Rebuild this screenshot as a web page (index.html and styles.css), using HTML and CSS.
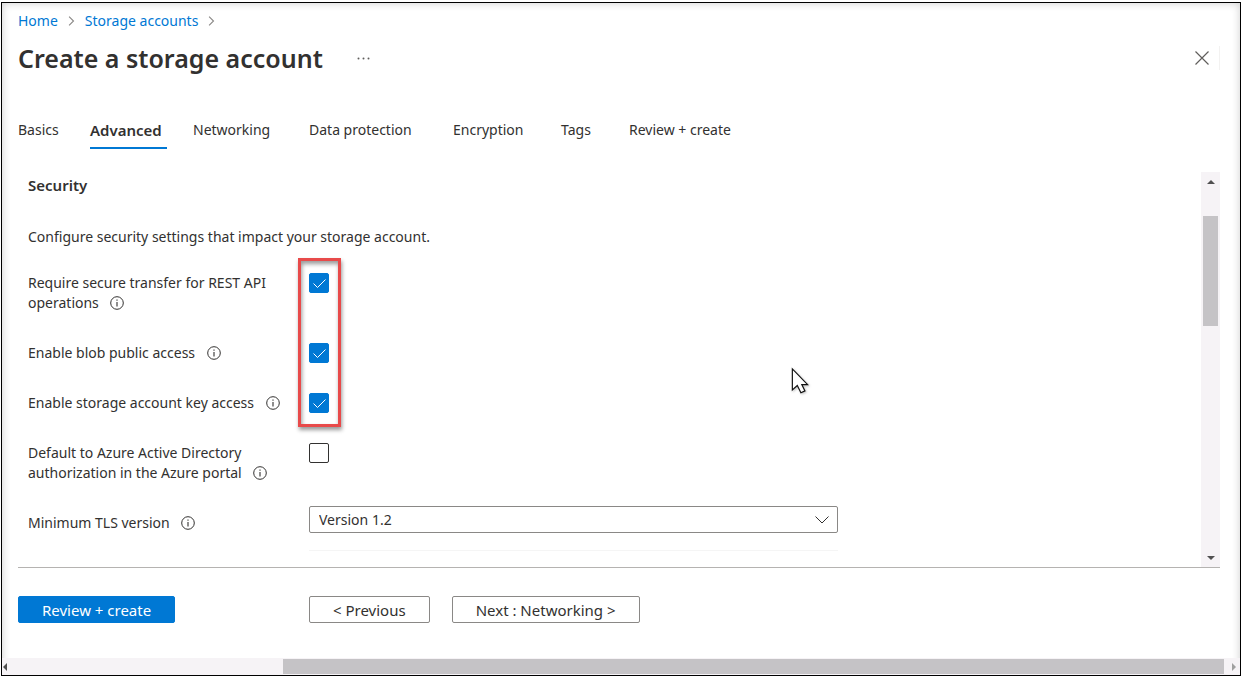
FILE: index.html
```html
<!DOCTYPE html>
<html lang="en">
<head>
<meta charset="utf-8">
<title>Create a storage account</title>
<link rel="stylesheet" href="styles.css">
</head>
<body>
<svg class="defs" aria-hidden="true">
  <symbol id="info" viewBox="0 0 14 14"><circle cx="7" cy="7" r="6.3" fill="none" stroke="currentColor"/><path d="M7 6v4.5M7 3.4v1.3" fill="none" stroke="currentColor" stroke-width="1.1"/></symbol>
  <symbol id="check" viewBox="0 0 20 20"><path d="M4.5 10.5l4 4 8-8" fill="none" stroke="currentColor"/></symbol>
  <symbol id="chevron" viewBox="0 0 6 10"><path d="M.6 .6L5 5L.6 9.4" fill="none" stroke="currentColor" stroke-width="1.1"/></symbol>
</svg>
<div class="frame">
  <div class="blade">
    <nav class="breadcrumb" aria-label="Breadcrumb">
      <a href="#">Home</a><svg class="sep"><use href="#chevron"/></svg>
      <a href="#">Storage accounts</a><svg class="sep"><use href="#chevron"/></svg>
    </nav>
    <header class="header">
      <h1>Create a storage account</h1>
      <button class="more" type="button" aria-label="More"><svg width="13" height="3" viewBox="0 0 13 3" fill="currentColor"><circle cx="1.5" cy="1.5" r="1"/><circle cx="6.5" cy="1.5" r="1"/><circle cx="11.5" cy="1.5" r="1"/></svg></button>
      <button class="close" type="button" aria-label="Close"><svg width="14" height="14" viewBox="0 0 14 14" fill="none" stroke="currentColor" stroke-width="1.2"><path d="M.5 .5l13 13M13.500 .5l-13 13"/></svg></button>
    </header>
    <nav class="tabs" aria-label="Steps">
      <a href="#">Basics</a>
      <a href="#" class="active" aria-current="step">Advanced</a>
      <a href="#">Networking</a>
      <a href="#">Data protection</a>
      <a href="#">Encryption</a>
      <a href="#">Tags</a>
      <a href="#">Review + create</a>
    </nav>
    <main class="panel">
      <form class="form">
        <h2>Security</h2>
        <p class="intro">Configure security settings that impact your storage account.</p>
        <div class="marked">
          <div class="field">
            <label for="rest">Require secure transfer for REST API operations <svg class="info"><use href="#info"/></svg></label>
            <span class="box"><input id="rest" type="checkbox" checked><svg><use href="#check"/></svg></span>
          </div>
          <div class="field">
            <label for="blob">Enable blob public access <svg class="info"><use href="#info"/></svg></label>
            <span class="box"><input id="blob" type="checkbox" checked><svg><use href="#check"/></svg></span>
          </div>
          <div class="field">
            <label for="key">Enable storage account key access <svg class="info"><use href="#info"/></svg></label>
            <span class="box"><input id="key" type="checkbox" checked><svg><use href="#check"/></svg></span>
          </div>
          <div class="highlight"></div>
        </div>
        <div class="field">
          <label for="aad">Default to Azure Active Directory authorization in the Azure portal <svg class="info"><use href="#info"/></svg></label>
          <span class="box"><input id="aad" type="checkbox"><svg><use href="#check"/></svg></span>
        </div>
        <div class="field field-select">
          <label for="tls">Minimum TLS version <svg class="info"><use href="#info"/></svg></label>
          <span class="select"><select id="tls"><option>Version 1.2</option></select><svg width="14" height="8" viewBox="0 0 14 8" fill="none" stroke="currentColor"><path d="M.5 .5L7 7L13.500 .5"/></svg></span>
        </div>
        <div class="field next-field"><span></span><span class="faint"></span></div>
      </form>
      <div class="vscroll" aria-hidden="true"><i class="up"></i><i class="vthumb"></i><i class="down"></i></div>
    </main>
    <footer class="footer">
      <div class="first"><button class="btn primary" type="button">Review + create</button></div>
      <button class="btn previous" type="button">&lt; Previous</button>
      <button class="btn next" type="button">Next : Networking &gt;</button>
    </footer>
  </div>
  <div class="hscroll" aria-hidden="true"><i class="left"></i><i class="hthumb"></i><i class="right"></i></div>
  <svg class="cursor" width="18" height="28" viewBox="0 0 20 30" aria-hidden="true"><path d="M1.500 1.500V25L7 20l4 8 4.500-2L12 19h6.500z" fill="#fff" stroke="#111" stroke-width="1.300"/></svg>
</div>
</body>
</html>
```
FILE: styles.css
```css
* { box-sizing: border-box; }
body {
  margin: 0;
  background: #fff;
  color: #323130;
  font: 14px/20px "Noto Sans", "Open Sans", sans-serif;
}
button, select, input { font: inherit; color: inherit; margin: 0; }
.defs { position: absolute; width: 0; height: 0; }
.frame {
  position: relative;
  display: flex;
  flex-direction: column;
  min-height: calc(100vh - 2px);
  margin: 2px 0 0 1px;
  border: 1px solid #000;
  box-shadow: inset 0 0 8px rgba(0, 0, 0, .2);
}
.blade {
  flex: 1;
  display: flex;
  flex-direction: column;
  padding: 8px 20px 35px 16px;
}
.breadcrumb { display: flex; align-items: center; gap: 10px; }
.breadcrumb a { color: #0078d4; text-decoration: none; }
.sep { width: 7px; height: 10px; color: #8a8886; }
.header { display: flex; align-items: center; height: 34px; margin-top: 10px; }
h1 { margin: 0; font-size: 25px; line-height: 34px; font-weight: 600; }
.more, .close { display: flex; padding: 0; border: 0; background: none; color: #605e5c; }
.more { margin-left: 34px; }
.close { margin-left: auto; padding: 5px 10px 5px 5px; border-right: 1px solid #f3f2f1; }
.tabs { display: grid; grid-template-columns: 72px 103px 116px 144px 108px 68px auto; justify-content: start; margin-top: 45px; }
.tabs a { justify-self: start; color: inherit; text-decoration: none; padding-bottom: 7px; border-bottom: 2px solid transparent; }
.tabs .active { font-size: 15px; font-weight: 600; border-color: #0078d4; padding-right: 5px; }
.panel { flex: 1; display: flex; margin-top: 23px; border-bottom: 1px solid #b5b3b1; }
.form { flex: 1; padding: 3px 10px 0; }
h2 { margin: 0; font-size: 15px; line-height: 20px; font-weight: 600; }
.intro { margin: 32px 0 26px; }
.marked { position: relative; }
.field { display: grid; grid-template-columns: 256px minmax(0, 529px); column-gap: 25px; margin-bottom: 30px; }
.info { width: 14px; height: 14px; margin-left: 8px; vertical-align: -2px; }
.box { position: relative; width: 20px; height: 20px; }
.box input { appearance: none; display: block; width: 20px; height: 20px; border: 1px solid #323130; border-radius: 2px; background: #fff; }
.box input:checked { background: #0078d4; border-color: #0078d4; }
.box svg { position: absolute; inset: 0; width: 20px; height: 20px; color: #fff; pointer-events: none; visibility: hidden; }
.box input:checked + svg { visibility: visible; }
.highlight {
  position: absolute;
  left: 270px;
  top: -15px;
  bottom: -14px;
  width: 43px;
  border: 3px solid #e84a4a;
  box-shadow: 1px 3px 4px rgba(0, 0, 0, .4), inset 1px 3px 4px rgba(0, 0, 0, .4);
  pointer-events: none;
}
.field-select { margin-top: -7px; margin-bottom: 17px; align-items: end; }
.select { position: relative; }
.select select { appearance: none; display: block; width: 100%; height: 27px; padding: 0 30px 0 9px; border: 1px solid #8a8886; border-radius: 2px; background: #fff; }
.select svg { position: absolute; right: 9px; top: 10px; pointer-events: none; }
.next-field { margin: 0; }
.faint { height: 1px; background: #f5f5f5; }
.vscroll { display: flex; flex-direction: column; align-items: center; width: 19px; background: #f6f3f6; }
.up, .down { border: 4px solid transparent; }
.up { margin-top: 4px; border-bottom-color: #505050; }
.down { margin-top: auto; margin-bottom: 3px; border-top-color: #505050; }
.vthumb { width: 15px; height: 110px; margin-top: 32px; background: #c5c3c6; }
.footer { display: flex; align-items: center; padding-top: 28px; }
.first { width: 291px; }
.btn { height: 27px; padding: 0 23px; border: 1px solid #8a8886; border-radius: 2px; background: #fff; font-size: 15px; line-height: 20px; }
.primary { background: #0078d4; border-color: #0078d4; color: #fff; }
.next { margin-left: 22px; }
.hscroll { display: flex; align-items: center; height: 17px; background: #f6f3f6; }
.left, .right { border: 4px solid transparent; }
.left { border-right-color: #505050; margin-left: -3px; }
.right { border-left-color: #a0a0a0; margin: 0 0 0 8px; }
.hthumb { flex: 1; height: 15px; margin-left: 276px; background: #c5c3c6; }
.cursor { position: absolute; left: 789px; top: 364px; filter: drop-shadow(1px 1px 1px rgba(0, 0, 0, .25)); }
```
